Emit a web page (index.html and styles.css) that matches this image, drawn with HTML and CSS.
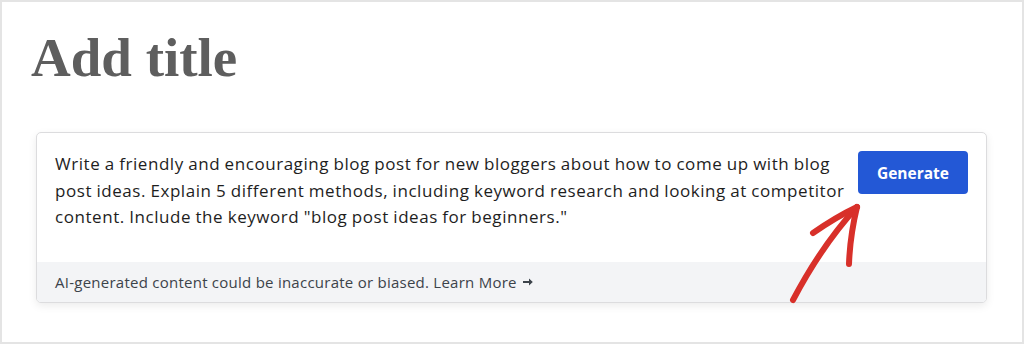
FILE: index.html
```html
<!DOCTYPE html>
<html>
<head>
<meta charset="utf-8">
<link rel="stylesheet" href="styles.css">
</head>
<body>
<div class="frame">
  <h1 class="title">Add title</h1>
  <div class="card">
    <div class="card-main">
      <p class="prompt">Write a friendly and encouraging blog post for new bloggers about how to come up with blog<br>post ideas. Explain 5 different methods, including keyword research and looking at competitor<br>content. Include the keyword "blog post ideas for beginners."</p>
      <button class="btn">Generate</button>
    </div>
    <div class="card-foot">AI-generated content could be inaccurate or biased. Learn More <svg class="more-arrow" width="10" height="8" viewBox="0 0 10 8"><path d="M0 3h6V0.5L9.8 4 6 7.5V5H0z" fill="#3c434a"/></svg></div>
  </div>
  <svg class="annot" width="1024" height="344" viewBox="0 0 1024 344">
    <g fill="none" stroke="#d8302a" stroke-width="6" stroke-linecap="round" stroke-linejoin="round">
      <path d="M793 300 Q822 245 857 207"/>
      <path d="M813 233 Q836 217 857 207"/>
      <path d="M857 207 Q850 236 849 264"/>
    </g>
  </svg>
</div>
</body>
</html>
```
FILE: styles.css
```css
html, body {
  margin: 0;
  padding: 0;
  background: #fff;
}
.frame {
  position: relative;
  box-sizing: border-box;
  width: 1024px;
  height: 344px;
  border: 2px solid #e4e4e4;
  padding: 26px 34px 0 34px;
}
.title {
  margin: 0 0 0 -5px;
  font-family: "Liberation Serif", serif;
  font-weight: bold;
  font-size: 55px;
  line-height: 60px;
  color: #5e5e5e;
}
.card {
  margin-top: 44px;
  width: 951px;
  box-sizing: border-box;
  border: 1px solid #dcdcde;
  border-radius: 5px;
  background: #fff;
  box-shadow: 0 3px 8px rgba(0,0,0,0.08);
  overflow: hidden;
}
.card-main {
  display: flex;
  justify-content: space-between;
  align-items: flex-start;
  padding: 18px 18px 31px 18px;
}
.prompt {
  margin: 0;
  font-family: "Open Sans", sans-serif;
  font-size: 17px;
  line-height: 26.5px;
  color: #1e1e1e;
  letter-spacing: 0.55px;
  word-spacing: -0.5px;
}
.btn {
  flex: none;
  width: 110px;
  height: 43px;
  border: none;
  border-radius: 4px;
  background: #2358d6;
  color: #fff;
  font-family: "Open Sans", sans-serif;
  font-weight: 700;
  font-size: 15.5px;
}
.card-foot {
  background: #f3f4f6;
  height: 40px;
  display: flex;
  align-items: center;
  gap: 6px;
  padding: 0 18px;
  font-family: "Open Sans", sans-serif;
  font-size: 15px;
  letter-spacing: 0.25px;
  color: #3c434a;
}
.annot {
  position: absolute;
  left: -2px;
  top: -2px;
  pointer-events: none;
}
```
